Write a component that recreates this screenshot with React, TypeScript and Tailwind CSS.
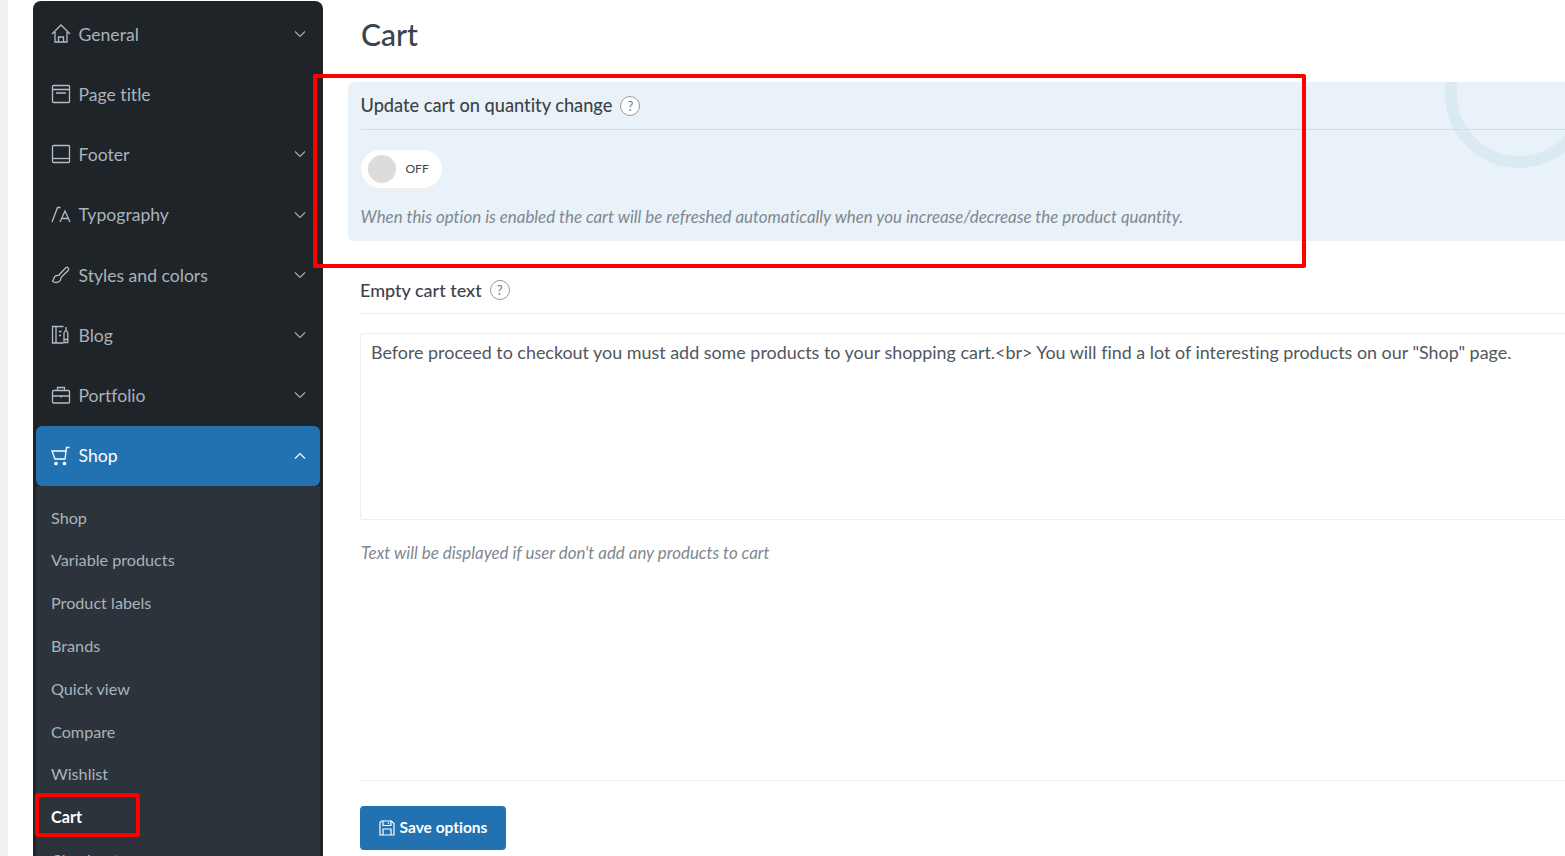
import React from "react";

function Chevron({ up = false }: { up?: boolean }) {
  return (
    <svg width="12" height="8" viewBox="0 0 12 8" fill="none" stroke="currentColor" strokeWidth="1.2" className="shrink-0">
      {up ? <path d="M1 6.500 6 1.500l5 5" /> : <path d="M1 1.500 6 6.500l5-5" />}
    </svg>
  );
}

const iconProps = {
  width: 20,
  height: 20,
  viewBox: "0 0 20 20",
  fill: "none",
  stroke: "currentColor",
  strokeWidth: 1.3,
  className: "shrink-0",
};

const icons: Record<string, React.ReactNode> = {
  General: (
    <svg {...iconProps}>
      <path d="M1 10 10 1l9 9M4 8v10h12V8M7.500 18v-5h5v5" />
    </svg>
  ),
  "Page title": (
    <svg {...iconProps}>
      <rect x="1.500" y="1.500" width="17" height="17" rx="1" />
      <path d="M1.500 5.500h17M5 9h10" />
    </svg>
  ),
  Footer: (
    <svg {...iconProps}>
      <rect x="1.500" y="1.500" width="17" height="17" rx="1" />
      <path d="M1.500 14.500h17" />
    </svg>
  ),
  Typography: (
    <svg {...iconProps}>
      <path d="M1 17 6.500 2.500h3M9 17l5-11 5 11M10.800 13.500h6.400" />
    </svg>
  ),
  "Styles and colors": (
    <svg {...iconProps}>
      <path d="M7.500 10.500 15 2.500c1-1 3.500.8 2.500 2.500L10 12.500M7.500 10.500c-2-.5-4 .5-4.500 2.500-.4 1.500-.8 2.500-1.500 3.500 2.500 1.500 6.500 1.500 8-1.500.6-1.200.5-2-0-2.500" />
    </svg>
  ),
  Blog: (
    <svg {...iconProps}>
      <path d="M12.500 1.500H1.500v16.500h11M5 1.500V18M8 6.500h2.500M8 10.500h2" />
      <path d="M15 5l-2 3v9.500h3.800V8zM13 14.500h3.800M15 2v3" />
    </svg>
  ),
  Portfolio: (
    <svg {...iconProps}>
      <rect x="1.500" y="5.500" width="17" height="12.500" rx="1" />
      <path d="M6.500 5.500V2.500h7v3M1.500 11h17M10 10v2.500" />
    </svg>
  ),
  Shop: (
    <svg {...iconProps}>
      <path d="M18.500 1.500H15.500L14 13H4L1 5h14" />
      <circle cx="5" cy="17.500" r="1.200" fill="currentColor" />
      <circle cx="13.500" cy="17.500" r="1.200" fill="currentColor" />
    </svg>
  ),
};

function MenuItem({ label, chevron = true }: { label: string; chevron?: boolean }) {
  return (
    <div className="flex h-[60.2px] items-center pl-[18px] pr-[17px] text-[#a9b3bb]">
      <span className="flex w-[27.500px] text-[#b4bcc3]">{icons[label]}</span>
      <span className="flex-1 pt-[2px] text-[17.600px]">{label}</span>
      {chevron && (
        <span className="text-[#a0aab2]">
          <Chevron />
        </span>
      )}
    </div>
  );
}

function Help() {
  return (
    <span className="ml-2 flex h-5 w-5 items-center justify-center rounded-full border border-[#999999] bg-white text-[13px] font-normal leading-none text-[#777777]">
      ?
    </span>
  );
}

export default function App() {
  const main = ["General", "Page title", "Footer", "Typography", "Styles and colors", "Blog", "Portfolio"];
  const sub = ["Shop", "Variable products", "Product labels", "Brands", "Quick view", "Compare", "Wishlist", "Cart", "Checkout"];
  return (
    <div className="relative flex h-[856px] w-[1565px] overflow-hidden bg-white font-['Lato','Noto_Sans',sans-serif] [font-variant-ligatures:none]">
      <div className="w-2 shrink-0 bg-[#f0f0f0]" />

      <aside className="ml-[25px] mt-px w-[290px] shrink-0 rounded-t-[8px] bg-[#1f2429]">
        <div className="pt-[3px]">
          {main.map((m) => (
            <MenuItem key={m} label={m} chevron={m !== "Page title"} />
          ))}
        </div>
        <div className="mx-[3px] mt-px flex h-[60px] items-center rounded-[6px] bg-[#2271b1] pl-[15px] pr-[14px] text-white">
          <span className="flex w-[27.500px]">{icons.Shop}</span>
          <span className="flex-1 pb-[1px] text-[17.600px]">Shop</span>
          <Chevron up />
        </div>
        <div className="mx-[3px] h-[400px] bg-[#2c333a] pt-[10px]">
          {sub.map((s) => (
            <div
              key={s}
              className={`flex h-[42.800px] items-center pl-[15px] text-[16.200px] ${s === "Cart" ? "font-bold text-white" : "text-[#a9b3bb]"}`}
            >
              {s}
            </div>
          ))}
        </div>
      </aside>

      <main className="ml-[25px] flex min-w-0 flex-1 flex-col">
        <h1 className="ml-[13px] mt-[14px] h-[40px] text-[30px] font-medium leading-[40px] text-[#3c434a]">Cart</h1>

        <section className="relative mt-[28px] h-[159px] w-[1240px] overflow-hidden rounded-l-[6px] bg-[#eaf2f9] pl-[12.500px]">
          <div className="absolute left-[1097px] top-[-62px] h-[148px] w-[148px] rounded-full border-[12px] border-[#dbeaf2]" />
          <div className="relative flex h-[48px] items-center border-b border-[#cddfed] pt-[1px] text-[18.200px] font-medium text-[#3c434a]">
            <span>Update cart on quantity change</span>
            <Help />
          </div>
          <div className="relative -ml-px mt-[19px] flex h-[40px] w-[83px] items-center rounded-full border border-[#eeeeee] bg-white pl-[7px]">
            <span className="h-7 w-7 rounded-full bg-[#dcdcdc]" />
            <span className="ml-[10px] text-[12px] text-[#3c434a]">OFF</span>
          </div>
          <p className="relative mt-[17px] whitespace-nowrap text-[16.900px] italic leading-[22px] text-[#7f8890]">
            When this option is enabled the cart will be refreshed automatically when you increase/decrease the product quantity.
          </p>
        </section>

        <div className="ml-[12px] mt-[25px] flex h-[48px] items-center border-b border-[#eeeeee] pt-[1px] text-[18px] font-medium text-[#3c434a]">
          Empty cart text
          <Help />
        </div>

        <div className="ml-[12px] mt-[19px] h-[187px] whitespace-nowrap rounded-l-[3px] border border-r-0 border-[#eeeeee] px-[10px] py-[5px] text-[17.900px] text-[#50575e]">
          {'Before proceed to checkout you must add some products to your shopping cart.<br> You will find a lot of interesting products on our "Shop" page.'}
        </div>

        <p className="ml-[13px] mt-[22px] text-[16.900px] italic leading-[22px] text-[#7f8890]">
          Text will be displayed if user don't add any products to cart
        </p>

        <div className="ml-[12px] mt-[216px] border-t border-[#eeeeee] pt-[25px]">
          <button className="flex h-[44px] w-[146px] items-center justify-center gap-[5px] rounded-[4px] bg-[#2271b1] text-[15.500px] font-bold text-white">
            <svg width="16" height="16" viewBox="0 0 16 16" fill="none" stroke="currentColor" strokeWidth="1.200">
              <path d="M1 2.500 2.500 1h10L15 3.500V15H1zM4 1v4.500h8V1M4 15V9h8v6M9.500 2.500v1.500" />
            </svg>
            Save options
          </button>
        </div>
      </main>

      <div className="pointer-events-none absolute left-[313px] top-[74px] h-[194px] w-[993px] rounded-[2px] border-[4px] border-[#ff0000]" />
      <div className="pointer-events-none absolute left-[35px] top-[793px] h-[44px] w-[105px] rounded-[3px] border-[4px] border-[#ff0000]" />
    </div>
  );
}
